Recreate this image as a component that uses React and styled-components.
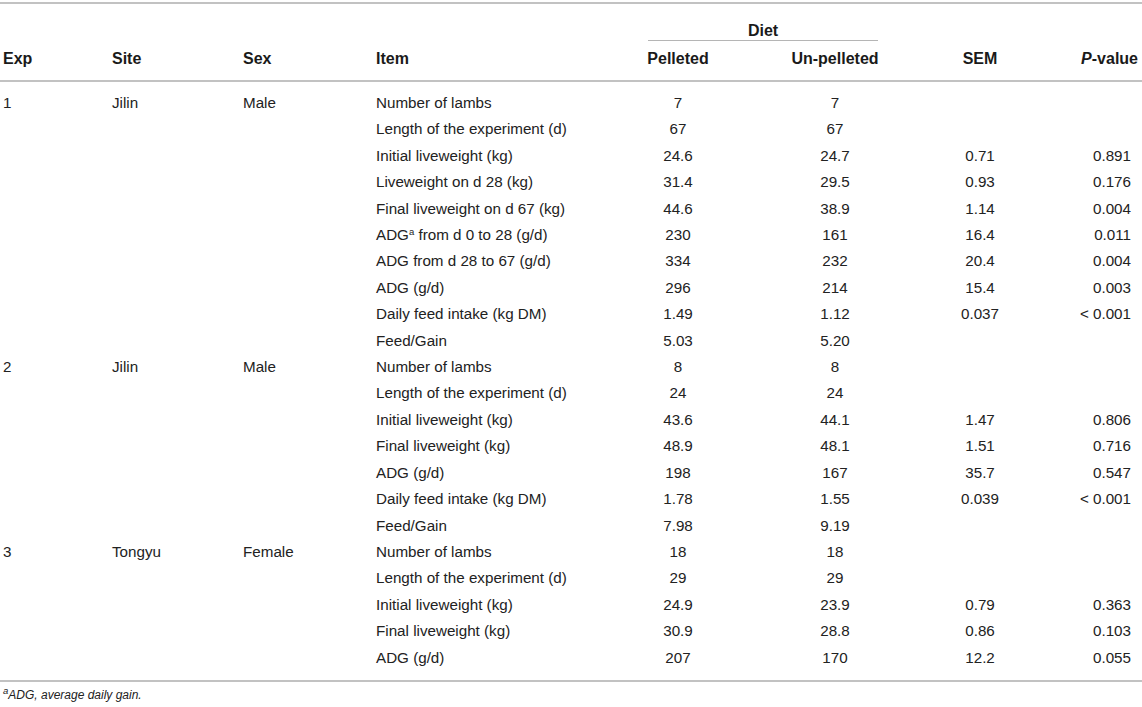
import React from "react";
import styled, { createGlobalStyle } from "styled-components";

const GlobalStyle = createGlobalStyle`
  html, body {
    margin: 0;
    padding: 0;
    background: #ffffff;
  }
  body {
    font-family: "Liberation Sans", Arial, Helvetica, sans-serif;
    color: #222222;
  }
`;

const groups = [
  {
    exp: "1",
    site: "Jilin",
    sex: "Male",
    rows: [
      ["Number of lambs", "7", "7", "", ""],
      ["Length of the experiment (d)", "67", "67", "", ""],
      ["Initial liveweight (kg)", "24.6", "24.7", "0.71", "0.891"],
      ["Liveweight on d 28 (kg)", "31.4", "29.5", "0.93", "0.176"],
      ["Final liveweight on d 67 (kg)", "44.6", "38.9", "1.14", "0.004"],
      ["ADG|a| from d 0 to 28 (g/d)", "230", "161", "16.4", "0.011"],
      ["ADG from d 28 to 67 (g/d)", "334", "232", "20.4", "0.004"],
      ["ADG (g/d)", "296", "214", "15.4", "0.003"],
      ["Daily feed intake (kg DM)", "1.49", "1.12", "0.037", "< 0.001"],
      ["Feed/Gain", "5.03", "5.20", "", ""],
    ],
  },
  {
    exp: "2",
    site: "Jilin",
    sex: "Male",
    rows: [
      ["Number of lambs", "8", "8", "", ""],
      ["Length of the experiment (d)", "24", "24", "", ""],
      ["Initial liveweight (kg)", "43.6", "44.1", "1.47", "0.806"],
      ["Final liveweight (kg)", "48.9", "48.1", "1.51", "0.716"],
      ["ADG (g/d)", "198", "167", "35.7", "0.547"],
      ["Daily feed intake (kg DM)", "1.78", "1.55", "0.039", "< 0.001"],
      ["Feed/Gain", "7.98", "9.19", "", ""],
    ],
  },
  {
    exp: "3",
    site: "Tongyu",
    sex: "Female",
    rows: [
      ["Number of lambs", "18", "18", "", ""],
      ["Length of the experiment (d)", "29", "29", "", ""],
      ["Initial liveweight (kg)", "24.9", "23.9", "0.79", "0.363"],
      ["Final liveweight (kg)", "30.9", "28.8", "0.86", "0.103"],
      ["ADG (g/d)", "207", "170", "12.2", "0.055"],
    ],
  },
];

const widths = [109, 131, 133, 247, 116, 198, 92, 116];

const Page = styled.div`
  width: 1142px;
  padding-top: 2px;
`;

const Table = styled.table`
  width: 1142px;
  table-layout: fixed;
  border-collapse: collapse;
  border-top: 2px solid #c2c2c2;
  border-bottom: 2px solid #c2c2c2;
`;

const Head = styled.thead`
  border-bottom: 2px solid #c2c2c2;
`;

const Th = styled.th`
  font-size: 16px;
  font-weight: bold;
  line-height: 18px;
  text-align: ${(p) => p.$align || "left"};
  vertical-align: ${(p) => (p.$bottom ? "bottom" : "middle")};
  padding: ${(p) =>
    p.$bottom
      ? "18px 0 0 0"
      : p.$align === "right"
      ? "9px 4px 12px 3px"
      : p.$align === "center"
      ? "9px 0 12px 0"
      : "9px 3px 12px 3px"};
  color: #1a1a1a;
  white-space: nowrap;
`;

const DietLabel = styled.div`
  margin: 0 56px 0 28px;
  text-align: center;
  border-bottom: 1px solid #b5b5b5;
`;

const Body = styled.tbody`
  tr:first-child td {
    padding-top: 13px;
  }
  tr:last-child td {
    padding-bottom: 14px;
  }
`;

const Td = styled.td`
  font-size: 15.2px;
  line-height: 16.4px;
  padding: 5px ${(p) => (p.$align === "right" ? "11px" : "3px")} 5px 3px;
  text-align: ${(p) => p.$align || "left"};
  white-space: nowrap;
  color: #222222;
`;

const Sup = styled.sup`
  font-size: 9.5px;
  line-height: 0;
  vertical-align: 5px;
`;

const Italic = styled.i`
  font-style: italic;
`;

const Footnote = styled.p`
  margin: 6px 0 0 3px;
  font-size: 12px;
  line-height: 14px;
  font-style: italic;
  color: #222222;
`;

const Item = ({ text }) => {
  const parts = text.split("|");
  if (parts.length === 1) return text;
  return (
    <>
      {parts[0]}
      <Sup>{parts[1]}</Sup>
      {parts[2]}
    </>
  );
};

export default function App() {
  return (
    <Page>
      <GlobalStyle />
      <Table>
        <colgroup>
          {widths.map((w, i) => (
            <col key={i} style={{ width: w }} />
          ))}
        </colgroup>
        <Head>
          <tr>
            <Th $bottom />
            <Th $bottom />
            <Th $bottom />
            <Th $bottom />
            <Th $bottom colSpan={2}>
              <DietLabel>Diet</DietLabel>
            </Th>
            <Th $bottom />
            <Th $bottom />
          </tr>
          <tr>
            <Th>Exp</Th>
            <Th>Site</Th>
            <Th>Sex</Th>
            <Th>Item</Th>
            <Th $align="center">Pelleted</Th>
            <Th $align="center">Un-pelleted</Th>
            <Th $align="center">SEM</Th>
            <Th $align="right">
              <Italic>P</Italic>-value
            </Th>
          </tr>
        </Head>
        <Body>
          {groups.map((g) =>
            g.rows.map((r, i) => (
              <tr key={g.exp + "-" + i}>
                <Td>{i === 0 ? g.exp : ""}</Td>
                <Td>{i === 0 ? g.site : ""}</Td>
                <Td>{i === 0 ? g.sex : ""}</Td>
                <Td>
                  <Item text={r[0]} />
                </Td>
                <Td $align="center">{r[1]}</Td>
                <Td $align="center">{r[2]}</Td>
                <Td $align="center">{r[3]}</Td>
                <Td $align="right">{r[4]}</Td>
              </tr>
            ))
          )}
        </Body>
      </Table>
      <Footnote>
        <Sup>a</Sup>ADG, average daily gain.
      </Footnote>
    </Page>
  );
}
